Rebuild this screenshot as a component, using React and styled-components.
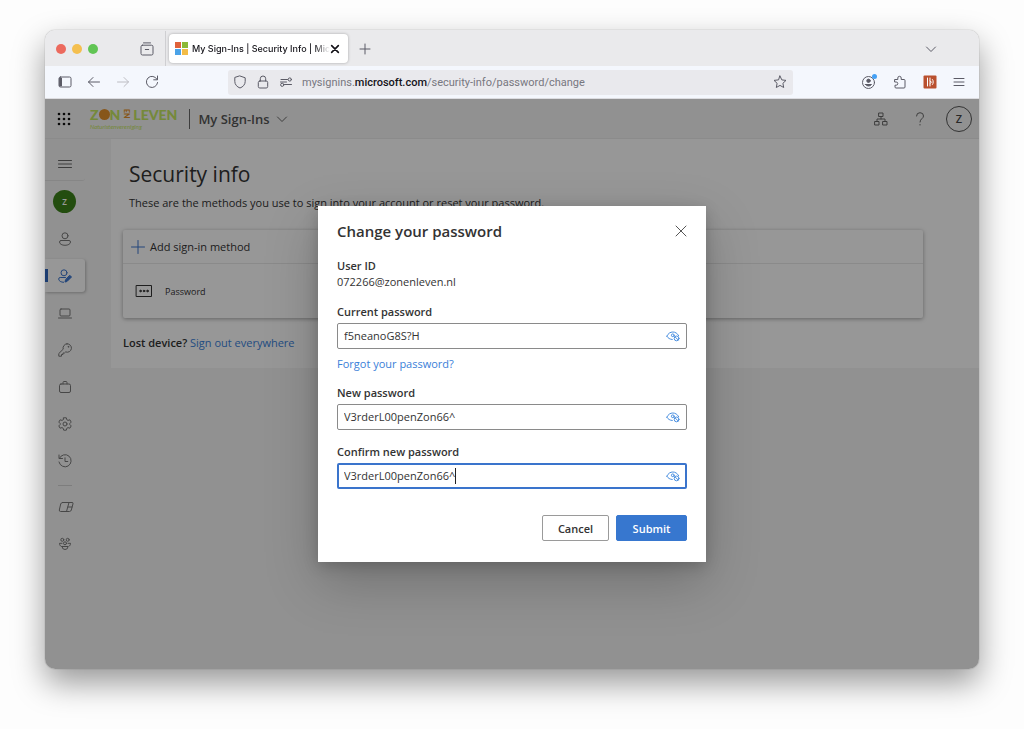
import { createGlobalStyle, styled } from "styled-components"

export default function App() {
    return (
        <Desktop>
            <GlobalStyle />
            <BrowserWindow>
                <TabBar>
                    <Lights>
                        <Light $color="#ec6a5e" />
                        <Light $color="#f4bf4f" />
                        <Light $color="#61c554" />
                    </Lights>
                    <IconButton aria-label="Firefox View">
                        <Icon $size={16} viewBox="0 0 16 16">
                            <path d="M4.5 1.9h7M3.5 4.2h9a1.5 1.5 0 0 1 1.5 1.5v6.8a1.5 1.5 0 0 1-1.5 1.5h-9a1.5 1.5 0 0 1-1.5-1.5v-6.8a1.5 1.5 0 0 1 1.5-1.5zM6.3 8.5h3.4" />
                        </Icon>
                    </IconButton>
                    <TabDivider />
                    <Tab>
                        <MicrosoftLogo />
                        <TabTitle>My Sign-Ins | Security Info | Mic</TabTitle>
                        <IconButton aria-label="Close tab">
                            <Icon $size={10} $color="#15141a" $stroke={2} viewBox="0 0 12 12">
                                <path d="M2 2l8 8M10 2l-8 8" />
                            </Icon>
                        </IconButton>
                    </Tab>
                    <IconButton aria-label="New tab">
                        <Icon $size={12} viewBox="0 0 12 12">
                            <path d="M6 1v10M1 6h10" />
                        </Icon>
                    </IconButton>
                    <TabListButton aria-label="List all tabs">
                        <Icon $size={12} viewBox="0 0 12 12">
                            <path d="M1.5 4l4.5 4.5L10.5 4" />
                        </Icon>
                    </TabListButton>
                </TabBar>

                <Toolbar>
                    <NavButtons>
                        <IconButton aria-label="Sidebar">
                            <Icon $size={14} viewBox="0 0 14 14">
                                <rect x="1" y="2" width="12" height="10" rx="1.5" />
                                <path d="M2 3h1.5v8H2z" fill="currentColor" />
                            </Icon>
                        </IconButton>
                        <IconButton aria-label="Back">
                            <Icon $size={14} viewBox="0 0 14 14">
                                <path d="M12.5 7h-11M6 2.5L1.5 7L6 11.5" />
                            </Icon>
                        </IconButton>
                        <IconButton aria-label="Forward">
                            <Icon $size={14} $color="#bcbcc2" viewBox="0 0 14 14">
                                <path d="M1.5 7h11M8 2.5L12.5 7L8 11.5" />
                            </Icon>
                        </IconButton>
                        <IconButton aria-label="Reload">
                            <Icon $size={14} viewBox="0 0 14 14">
                                <path d="M12 4.3A5.6 5.6 0 1 0 12.6 7.5M12.5 1v3.8H8.7" />
                            </Icon>
                        </IconButton>
                    </NavButtons>
                    <AddressBar>
                        <Icon $size={14} viewBox="0 0 14 14">
                            <path d="M7 1l5.2 1.800v3.700c0 3-2.200 5.400-5.200 6.500c-3-1.100-5.200-3.500-5.200-6.500V2.800z" />
                        </Icon>
                        <Icon $size={14} viewBox="0 0 14 14">
                            <rect x="2.3" y="6" width="9.4" height="7" rx="1.5" />
                            <path d="M4.3 6V3.700a2.700 2.700 0 0 1 5.400 0V6" />
                        </Icon>
                        <Icon $size={14} viewBox="0 0 14 14">
                            <path d="M2 4.5h6.500M5.500 9.500H12.500M1.500 7h6" />
                            <circle cx="10.8" cy="4.5" r="1.6" />
                            <circle cx="3.2" cy="9.8" r="1.6" />
                        </Icon>
                        <Url>mysignins.<b>microsoft.com</b>/security-info/password/change</Url>
                        <IconButton aria-label="Bookmark">
                            <Icon $size={14} viewBox="0 0 14 14">
                                <path d="M7 1l1.800 3.900l4.200.500l-3.100 2.900l.800 4.200L7 10.400l-3.700 2.100l.800-4.200L1 5.400l4.200-.500z" />
                            </Icon>
                        </IconButton>
                    </AddressBar>
                    <ToolButtons>
                        <IconButton aria-label="Account">
                            <Icon $size={16} viewBox="0 0 16 16">
                                <circle cx="7.5" cy="8.500" r="6" />
                                <circle cx="7.5" cy="6.800" r="1.700" fill="currentColor" />
                                <path d="M4.500 10.500h6a3.300 2.500 0 0 1-6 0z" fill="currentColor" />
                                <circle cx="13.500" cy="2.500" r="2.500" fill="#45a1f5" stroke="none" />
                            </Icon>
                        </IconButton>
                        <IconButton aria-label="Extensions">
                            <Icon $size={14} viewBox="0 0 14 14">
                                <path d="M2 4.500h2.800V3a1.700 1.700 0 0 1 3.400 0v1.500h2.800a1 1 0 0 1 1 1v6.500a1 1 0 0 1-1 1H3a1 1 0 0 1-1-1v-1.800h1.200a1.600 1.600 0 0 0 0-3.200H2z" />
                            </Icon>
                        </IconButton>
                        <IconButton aria-label="Extension">
                            <Icon $size={14} $color="#fff" viewBox="0 0 14 14">
                                <rect x="0.5" y="0.5" width="13" height="13" rx="1" fill="#b9502f" stroke="none" />
                                <path d="M4.500 3v8M7 3v8M7 6l1.500 1.200L7 8.500M9.500 4.500c1 1 1 4 0 5" />
                            </Icon>
                        </IconButton>
                        <IconButton aria-label="Menu">
                            <Icon $size={12} viewBox="0 0 12 12">
                                <path d="M1 2.500h10M1 6h10M1 9.500h10" />
                            </Icon>
                        </IconButton>
                    </ToolButtons>
                </Toolbar>

                <Page>
                    <AppHeader>
                        <IconButton aria-label="App launcher">
                            <Icon $size={14} $color="#111" viewBox="0 0 14 14">
                                {[2, 7, 12].map(y => [2, 7, 12].map(x => (
                                    <circle key={`${x}-${y}`} cx={x} cy={y} r="1.3" fill="currentColor" stroke="none" />
                                )))}
                            </Icon>
                        </IconButton>
                        <Brand>
                            <BrandName>Z<Sun />N<BrandSmall>EN</BrandSmall>LEVEN</BrandName>
                            <BrandTagline>Naturistenvereniging</BrandTagline>
                        </Brand>
                        <AppTitle>
                            My Sign-Ins
                            <Icon $size={12} $color="#666" viewBox="0 0 12 12">
                                <path d="M1.500 4l4.500 4.500L10.500 4" />
                            </Icon>
                        </AppTitle>
                        <HeaderButtons>
                            <IconButton aria-label="Organizations">
                                <Icon $size={14} $color="#666" viewBox="0 0 14 14">
                                    <rect x="5" y="1" width="4" height="3.5" />
                                    <rect x="1" y="9.5" width="4" height="3.5" />
                                    <rect x="9" y="9.5" width="4" height="3.5" />
                                    <path d="M7 4.500V7M3 9.500V7h8v2.500" />
                                </Icon>
                            </IconButton>
                            <IconButton aria-label="Help">
                                <Icon $size={14} $color="#666" viewBox="0 0 14 14">
                                    <path d="M3.500 4a3.500 3.300 0 0 1 7 0c0 2.500-3.500 2.800-3.500 6M7 12.500v.5" />
                                </Icon>
                            </IconButton>
                        </HeaderButtons>
                        <Account aria-label="Account manager">Z</Account>
                    </AppHeader>

                    <Body>
                        <SideNav>
                            <NavItem aria-label="Collapse navigation" $line>
                                <Icon $size={14} $color="#666" viewBox="0 0 14 14">
                                    <path d="M.5 3.500h13M.5 7h13M.5 10.500h13" />
                                </Icon>
                            </NavItem>
                            <NavItem aria-label="Profile" $flush><Avatar>Z</Avatar></NavItem>
                            <NavItem aria-label="Overview">
                                <Icon $size={14} $color="#777" viewBox="0 0 14 14">
                                    <circle cx="7" cy="3.8" r="3" />
                                    <path d="M3 8.500h8a1.500 1.500 0 0 1 1.500 1.500c0 2-2.500 3.300-5.500 3.300S1.500 12 1.500 10A1.500 1.500 0 0 1 3 8.500z" />
                                </Icon>
                            </NavItem>
                            <NavItem aria-label="Security info" $active>
                                <Icon $size={14} $color="#3a74cc" viewBox="0 0 14 14">
                                    <circle cx="6" cy="3.8" r="3" />
                                    <path d="M7.500 8.500H2.200A1.500 1.500 0 0 0 .7 10c0 2 2.300 3.300 5 3.300" />
                                    <path d="M12 6.500l1.500 1.500l-4.500 4.500l-2 .500l.500-2z" fill="currentColor" />
                                </Icon>
                            </NavItem>
                            <NavItem aria-label="Devices">
                                <Icon $size={14} $color="#777" viewBox="0 0 14 14">
                                    <rect x="2" y="3" width="10" height="7" rx="1" />
                                    <path d="M.5 12h13" />
                                </Icon>
                            </NavItem>
                            <NavItem aria-label="Password">
                                <Icon $size={14} $color="#777" viewBox="0 0 14 14">
                                    <path d="M9 .8a4.200 4.200 0 1 1-1.300 8.100L6.500 10H5v1.500H3.500v1.700H.8v-2.700l4.400-4.300A4.200 4.200 0 0 1 9 .8z" />
                                    <circle cx="10.3" cy="3.8" r=".4" />
                                </Icon>
                            </NavItem>
                            <NavItem aria-label="Organizations">
                                <Icon $size={14} $color="#777" viewBox="0 0 14 14">
                                    <rect x="1.5" y="4" width="11" height="8.5" rx="1.5" />
                                    <path d="M5 4V2.500a1 1 0 0 1 1-1h2a1 1 0 0 1 1 1V4" />
                                </Icon>
                            </NavItem>
                            <NavItem aria-label="Settings">
                                <Icon $size={14} $color="#777" viewBox="0 0 14 14">
                                    <circle cx="7" cy="7" r="2" />
                                    <path d="M5.700.8h2.600l.500 1.900l1.200.700l1.900-.600l1.300 2.300L11.800 6.500v1l1.400 1.400l-1.300 2.300l-1.900-.600l-1.200.700l-.500 1.900H5.700l-.500-1.900L4 10.600l-1.900.600L.8 8.900l1.400-1.400v-1L.8 5.100l1.300-2.300L4 3.400l1.200-.700z" />
                                </Icon>
                            </NavItem>
                            <NavItem aria-label="My sign-ins">
                                <Icon $size={14} $color="#777" viewBox="0 0 14 14">
                                    <path d="M1 1v3.500h3.500M1.300 4.500A6.100 6.100 0 1 1 1 8M7 3.800V7.500h2.800" />
                                </Icon>
                            </NavItem>
                            <NavDivider />
                            <NavItem aria-label="My Apps">
                                <Icon $size={16} $color="#777" viewBox="0 0 16 16">
                                    <path d="M4.500 3.500h9.500a1 1 0 0 1 1 1.300l-1.700 6.200a2 2 0 0 1-1.800 1.500H2.500A1.300 1.300 0 0 1 1.300 11l1.400-6A2 2 0 0 1 4.500 3.500zM11 3.500l-2.500 9M10 8h4" />
                                </Icon>
                            </NavItem>
                            <NavItem aria-label="My Groups">
                                <Icon $size={14} $color="#777" viewBox="0 0 14 14">
                                    <circle cx="4.3" cy="2.8" r="1.500" />
                                    <circle cx="9.7" cy="2.8" r="1.500" />
                                    <circle cx="7" cy="6.300" r="1.500" />
                                    <path d="M4 9.500h6a3 3 0 0 1-6 0zM4 6.300H1.500c0 1.700.6 2.500 1.600 3M10 6.300h2.500c0 1.700-.6 2.500-1.600 3" />
                                </Icon>
                            </NavItem>
                        </SideNav>

                        <Main>
                            <Title>Security info</Title>
                            <Intro>These are the methods you use to sign into your account or reset your password.</Intro>
                            <MethodCard>
                                <AddMethod>
                                    <Icon $size={14} $color="#3a74cc" viewBox="0 0 14 14">
                                        <path d="M7 .5v13M.5 7h13" />
                                    </Icon>
                                    Add sign-in method
                                </AddMethod>
                                <Method>
                                    <Icon $size={18} $color="#333" viewBox="0 0 18 18">
                                        <rect x="1.5" y="3.5" width="15" height="11" />
                                        <circle cx="5.5" cy="9" r=".8" fill="currentColor" />
                                        <circle cx="9" cy="9" r=".8" fill="currentColor" />
                                        <circle cx="12.5" cy="9" r=".8" fill="currentColor" />
                                    </Icon>
                                    Password
                                </Method>
                            </MethodCard>
                            <LostDevice>
                                <b>Lost device?</b> <Link href="#signout">Sign out everywhere</Link>
                            </LostDevice>
                        </Main>
                    </Body>

                    <Overlay>
                        <Dialog role="dialog" aria-labelledby="dialog-title">
                            <DialogHeader>
                                <DialogTitle id="dialog-title">Change your password</DialogTitle>
                                <IconButton aria-label="Close">
                                    <Icon $size={12} $color="#555" viewBox="0 0 12 12">
                                        <path d="M1 1l10 10M11 1L1 11" />
                                    </Icon>
                                </IconButton>
                            </DialogHeader>
                            <Label as="p">User ID</Label>
                            <UserId>072266@zonenleven.nl</UserId>

                            <PasswordField id="current" label="Current password" value="f5neanoG8S?H" />
                            <ForgotLink href="#forgot">Forgot your password?</ForgotLink>
                            <PasswordField id="new" label="New password" value="V3rderL00penZon66^" />
                            <PasswordField id="confirm" label="Confirm new password" value="V3rderL00penZon66^" typing />

                            <Actions>
                                <Button>Cancel</Button>
                                <Button $primary>Submit</Button>
                            </Actions>
                        </Dialog>
                    </Overlay>
                </Page>
            </BrowserWindow>
        </Desktop>
    )
}

function PasswordField({ id, label, value, typing }) {
    return (
        <Field>
            <Label htmlFor={id}>{label}</Label>
            <InputBox $typing={typing}>
                <Input id={id} type="text" defaultValue={value} $typing={typing} />
                {typing && <Caret />}
                <RevealButton aria-label="Hide password">
                    <Icon $size={14} $color="#4a8fe0" viewBox="0 0 14 14">
                        <path d="M.8 7.200C2.300 4.300 4.300 3 6.800 3s4.500 1.300 5.900 3.700M.8 7.200c1.300 2 3 3.100 5.500 3.300" />
                        <circle cx="6.8" cy="6.3" r="1.4" />
                        <circle cx="10.6" cy="9.4" r="2.4" fill="#fff" />
                        <path d="M9 7.800l3.200 3.200" />
                    </Icon>
                </RevealButton>
            </InputBox>
        </Field>
    )
}

function MicrosoftLogo() {
    return (
        <Logo viewBox="0 0 13 13">
            <path fill="#e0623a" d="M0 0h6v6H0z" />
            <path fill="#8cb936" d="M7 0h6v6H7z" />
            <path fill="#4ba3e8" d="M0 7h6v6H0z" />
            <path fill="#f3bc47" d="M7 7h6v6H7z" />
        </Logo>
    )
}

const GlobalStyle = createGlobalStyle`
    * {
        box-sizing: border-box;
    }

    body {
        margin: 0;
        background-color: #fdfdfd;
        font-family: "Open Sans", "Noto Sans", sans-serif;
        color: #333;
    }

    button, input {
        font-family: inherit;
        color: inherit;
    }

    h1, h2, p {
        margin: 0;
    }
`

const Desktop = styled.div`
    display: flex;
    min-height: 100vh;
    padding: 30px 45px 60px;
`

const BrowserWindow = styled.div`
    flex: 1;
    min-width: 0;
    display: flex;
    flex-direction: column;
    border-radius: 10px;
    overflow: hidden;
    box-shadow: 0 0 1px rgba(0, 0, 0, 0.5), 0 14px 32px rgba(0, 0, 0, 0.4);
`

const Icon = styled.svg`
    display: block;
    flex: none;
    width: ${props => props.$size}px;
    height: ${props => props.$size}px;
    color: ${props => props.$color || "#5b5b66"};
    fill: none;
    stroke: currentColor;
    stroke-width: ${props => props.$stroke || 1};
    stroke-linecap: round;
    stroke-linejoin: round;
`

const IconButton = styled.button`
    display: flex;
    align-items: center;
    justify-content: center;
    flex: none;
    padding: 0;
    border: none;
    background-color: transparent;
    cursor: pointer;
`

const TabBar = styled.div`
    display: flex;
    align-items: center;
    height: 36px;
    padding: 1px 42px 0 11px;
    background-color: #eaeaec;
    font-family: Inter, sans-serif;
`

const Lights = styled.div`
    display: flex;
    gap: 6px;
    margin-right: 41px;
`

const Light = styled.span`
    width: 10px;
    height: 10px;
    border-radius: 50%;
    background-color: ${props => props.$color};
`

const TabDivider = styled.span`
    width: 1px;
    height: 36px;
    margin: 0 3px 0 10px;
    background-color: #cfcfd2;
`

const Tab = styled.div`
    display: flex;
    align-items: center;
    width: 179px;
    height: 29px;
    margin-right: 11px;
    padding: 0 8px 0 6px;
    border-radius: 4px;
    background-color: #fff;
    box-shadow: 0 0 3px rgba(0, 0, 0, 0.3);
`

const Logo = styled.svg`
    flex: none;
    width: 13px;
    height: 13px;
    margin-right: 4px;
`

const TabTitle = styled.span`
    flex: 1;
    white-space: nowrap;
    font-size: 9px;
    font-weight: 500;
    color: #15141a;
    mask-image: linear-gradient(to left, transparent, #000 16px);
`

const TabListButton = styled(IconButton)`
    margin-left: auto;
`

const Toolbar = styled.div`
    display: flex;
    align-items: center;
    height: 33px;
    padding: 0 14px 0 13px;
    border-bottom: 1px solid #dcdce0;
    background-color: #f4f7fd;
`

const NavButtons = styled.div`
    display: flex;
    gap: 15px;
    margin-right: 69px;
`

const AddressBar = styled.div`
    flex: 1;
    display: flex;
    align-items: center;
    gap: 9px;
    height: 25px;
    margin-right: 68px;
    padding: 0 6px 0 5px;
    border-radius: 3px;
    background-color: #e9e9ed;
`

const Url = styled.span`
    flex: 1;
    font-family: Roboto, sans-serif;
    font-size: 11px;
    color: #77777f;

    b{
        font-weight: 500;
        color: #15141a;
    }
`

const ToolButtons = styled.div`
    display: flex;
    align-items: center;
    gap: 16px;
`

const Page = styled.div`
    position: relative;
    flex: 1;
    display: flex;
    flex-direction: column;
    background-color: #f2f2f2;
`

const AppHeader = styled.header`
    display: flex;
    align-items: center;
    height: 40px;
    padding: 0 7px 0 12px;
    border-bottom: 1px solid #e8e8e8;
`

const Brand = styled.div`
    margin: 0 12px 0 19px;
`

const BrandName = styled.div`
    display: flex;
    align-items: center;
    font-family: Lato, sans-serif;
    font-size: 14px;
    font-weight: 900;
    line-height: 17px;
    color: #c3e461;
`

const Sun = styled.span`
    width: 11px;
    height: 11px;
    border-radius: 50%;
    background-color: #e2902c;
`

const BrandSmall = styled.span`
    height: 11px;
    margin: 0 2px;
    font-size: 7px;
    line-height: 9px;
    color: #e2902c;
    writing-mode: vertical-rl;
`

const BrandTagline = styled.div`
    font-family: Lato, sans-serif;
    font-size: 6px;
    font-style: italic;
    line-height: 8px;
    color: #c3e461;
`

const AppTitle = styled.div`
    display: flex;
    align-items: center;
    gap: 6px;
    height: 20px;
    padding-left: 8px;
    border-left: 1px solid #666;
    font-size: 13px;
    font-weight: 600;
    color: #555;
`

const HeaderButtons = styled.div`
    display: flex;
    align-items: center;
    gap: 25px;
    margin: 0 19px 0 auto;
`

const Account = styled(IconButton)`
    width: 26px;
    height: 26px;
    border: 1px solid #555;
    border-radius: 50%;
    font-size: 11px;
    font-weight: 600;
    color: #444;
`

const Body = styled.div`
    flex: 1;
    display: flex;
    align-items: flex-start;
`

const SideNav = styled.nav`
    display: flex;
    flex-direction: column;
    width: 66px;
    padding-top: 9px;
`

const NavItem = styled.button`
    display: flex;
    align-items: center;
    width: 40px;
    height: 33px;
    margin-bottom: 4px;
    padding: 0 0 0 ${props => props.$flush ? 8 : 13}px;
    border: none;
    border-bottom: ${props => props.$line ? "1px solid #e0e0e0" : "none"};
    border-radius: 0 3px 3px 0;
    background: ${props => props.$active ? "linear-gradient(#2f66bd, #2f66bd) left center / 3px 13px no-repeat #fcfcfc" : "transparent"};
    box-shadow: ${props => props.$active ? "1px 1px 3px rgba(0, 0, 0, 0.25)" : "none"};
    cursor: pointer;
`

const Avatar = styled.span`
    display: flex;
    align-items: center;
    justify-content: center;
    flex: none;
    width: 23px;
    height: 23px;
    border-radius: 50%;
    background-color: #3b8019;
    font-size: 8px;
    font-weight: 600;
    color: #fff;
`

const NavDivider = styled.span`
    width: 14px;
    height: 1px;
    margin: 4px 0 4px 13px;
    background-color: #d0d0d0;
`

const Main = styled.main`
    flex: 1;
    min-width: 0;
    padding: 20px 56px 17px 12px;
    background-color: #fcfcfc;
`

const Title = styled.h1`
    padding-left: 6px;
    font-size: 21px;
    font-weight: 400;
    line-height: 30px;
`

const Intro = styled.p`
    padding-left: 6px;
    margin: 6px 0 19px;
    font-size: 11px;
    line-height: 16px;
`

const MethodCard = styled.section`
    border-radius: 2px;
    box-shadow: 0 1px 4px rgba(0, 0, 0, 0.35);
`

const AddMethod = styled.button`
    display: flex;
    align-items: center;
    gap: 5px;
    width: 100%;
    height: 34px;
    padding: 0 8px;
    border: none;
    border-bottom: 1px solid #e6e6e6;
    background-color: transparent;
    font-size: 11px;
    cursor: pointer;
`

const Method = styled.div`
    display: flex;
    align-items: center;
    gap: 12px;
    height: 54px;
    padding: 0 12px;
    font-size: 9px;
`

const LostDevice = styled.p`
    margin-top: 17px;
    font-size: 11px;
    line-height: 16px;

    b{
        font-weight: 600;
    }
`

const Link = styled.a`
    color: #3a80d8;
    text-decoration: none;
`

const Overlay = styled.div`
    position: absolute;
    inset: 0;
    display: flex;
    align-items: center;
    justify-content: center;
    background-color: rgba(0, 0, 0, 0.4);
`

const Dialog = styled.div`
    width: 388px;
    padding: 14px 19px 21px;
    background-color: #fff;
    box-shadow: 0 20px 50px rgba(0, 0, 0, 0.22), 0 4px 14px rgba(0, 0, 0, 0.18);
`

const DialogHeader = styled.div`
    display: flex;
    align-items: center;
    justify-content: space-between;
    margin-bottom: 16px;
`

const DialogTitle = styled.h2`
    font-size: 15px;
    font-weight: 600;
    line-height: 22px;
`

const Label = styled.label`
    display: block;
    font-size: 11px;
    font-weight: 600;
    line-height: 16px;
`

const UserId = styled.p`
    margin-bottom: 14px;
    font-size: 11px;
    line-height: 16px;
`

const Field = styled.div`
    margin-bottom: 14px;
`

const InputBox = styled.div`
    display: flex;
    align-items: center;
    height: 26px;
    margin-top: 3px;
    padding: 0 ${props => props.$typing ? 5 : 6}px;
    border: ${props => props.$typing ? "2px solid #3a74cc" : "1px solid #8a8a8a"};
    border-radius: 2px;
`

const Input = styled.input`
    flex: ${props => props.$typing ? "none" : 1};
    field-sizing: ${props => props.$typing ? "content" : "fixed"};
    min-width: 0;
    padding: 0;
    border: none;
    outline: none;
    background-color: transparent;
    font-size: 11px;
    line-height: 16px;
`

const Caret = styled.span`
    width: 1px;
    height: 16px;
    background-color: #222;
`

const RevealButton = styled(IconButton)`
    margin-left: auto;
`

const ForgotLink = styled(Link)`
    display: block;
    margin: -7px 0 13px;
    font-size: 11px;
    line-height: 16px;
`

const Actions = styled.div`
    display: flex;
    justify-content: flex-end;
    gap: 7px;
    margin-top: 26px;
`

const Button = styled.button`
    width: ${props => props.$primary ? 71 : 67}px;
    height: 26px;
    border: 1px solid ${props => props.$primary ? "#3777cf" : "#9a9a9a"};
    border-radius: 2px;
    background-color: ${props => props.$primary ? "#3777cf" : "#fff"};
    font-size: 11px;
    font-weight: 600;
    color: ${props => props.$primary ? "#fff" : "#333"};
    cursor: pointer;
`
